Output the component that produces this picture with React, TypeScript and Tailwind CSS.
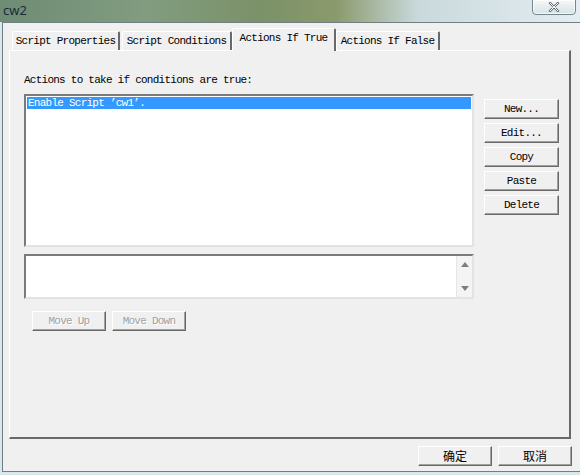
import React from "react";

const mono = "font-['Liberation_Mono',monospace] text-[11px] tracking-[-0.75px]";

const tabs = [
  { label: "Script Properties", w: "w-[108px] ml-[3px]" },
  { label: "Script Conditions", w: "w-[110px] ml-[2px]" },
  { label: "Actions If True", w: "w-[104px]", active: true },
  { label: "Actions If False", w: "w-[104px]" },
];

const sideButtons = ["New...", "Edit...", "Copy", "Paste", "Delete"];

const btn =
  "flex items-center justify-center bg-[#f0f0f0] border border-t-white border-l-white border-r-[#696969] border-b-[#696969] shadow-[inset_-1px_-1px_0_#a0a0a0]";

export default function App() {
  return (
    <div className="w-[580px] h-[475px] overflow-hidden flex flex-col bg-[#d9e8ec]">
      {/* title bar */}
      <div className="h-[22px] flex justify-between items-start bg-[linear-gradient(90deg,#6f8c74_0%,#819c80_25%,#7b9168_45%,#8b9a6c_58%,#c9d9dc_72%,#e4edf1_100%)]">
        <span className="pl-[3px] pt-[2px] text-[13px] leading-[16px] text-[#1b2a3a] font-['Noto_Sans',sans-serif]">
          cw2
        </span>
        <div className="mr-[4px] -mt-px w-[44px] h-[16px] flex items-center justify-center rounded-b-[4px] border border-[#74868c] bg-[linear-gradient(180deg,#f4f7f8,#d8e2e6)] shadow-[inset_0_0_0_1px_rgba(255,255,255,0.7)]">
          <svg width="12" height="10" viewBox="0 0 12 10">
            <path d="M2 1 L10 9 M10 1 L2 9" stroke="#5b6a72" strokeWidth="2.4" strokeLinecap="round" />
            <path d="M2 1 L10 9 M10 1 L2 9" stroke="#ffffff" strokeWidth="1" strokeLinecap="round" />
          </svg>
        </div>
      </div>

      {/* client area */}
      <div className={`ml-[2px] h-[450px] flex flex-col bg-[#f0f0f0] border-l border-t border-b border-[#6f7f84] pt-[5px] text-black ${mono}`}>
        <div className="pl-[6px] flex flex-col">
          {/* tabs */}
          <div className="flex items-end h-[22px]">
            {tabs.map((t) =>
              t.active ? (
                <div
                  key={t.label}
                  className={`${t.w} relative z-10 -mb-px h-[23px] flex items-start justify-center pt-[3px] bg-[#f0f0f0] border-l border-t border-t-white border-l-white border-r-2 border-r-[#696969] rounded-t-[2px] leading-[13px]`}
                >
                  {t.label}
                </div>
              ) : (
                <div
                  key={t.label}
                  className={`${t.w} h-[19px] flex items-start justify-center pt-[3px] border-l border-t border-t-white border-l-white border-r-2 border-r-[#696969] rounded-t-[2px] leading-[13px]`}
                >
                  {t.label}
                </div>
              )
            )}
          </div>

          {/* panel */}
          <div className="w-[562px] h-[389px] border-l border-t border-l-white border-t-white border-r-2 border-b-2 border-r-[#696969] border-b-[#696969] pl-[14px] pt-[23px] flex flex-col">
            <div className="leading-[12px] h-[12px]">Actions to take if conditions are true:</div>

            <div className="flex mt-[8px]">
              {/* list box */}
              <div className="w-[450px] h-[153px] bg-white border-2 border-t-[#7a7a7a] border-l-[#7a7a7a] border-r-[#e3e3e3] border-b-[#e3e3e3] p-px">
                <div className="h-[12px] bg-[#3399ff] text-white leading-[12px] pl-[1px]">
                  Enable Script ’cw1’.
                </div>
              </div>

              <div className="ml-[10px] pt-[5px] flex flex-col gap-[4px]">
                {sideButtons.map((b) => (
                  <div key={b} className={`${btn} w-[75px] h-[20px] leading-[12px]`}>
                    {b}
                  </div>
                ))}
              </div>
            </div>

            {/* text area */}
            <div className="mt-[7px] w-[450px] h-[45px] flex bg-white border-2 border-t-[#7a7a7a] border-l-[#7a7a7a] border-r-[#e3e3e3] border-b-[#e3e3e3]">
              <div className="flex-1" />
              <div className="w-[16px] flex flex-col justify-between items-center py-[6px] bg-[#f4f4f4] border-l border-[#e6e6e6]">
                <svg width="8" height="5" viewBox="0 0 8 5">
                  <path d="M0 5 L4 0 L8 5 Z" fill="#7d7d7d" />
                </svg>
                <svg width="8" height="5" viewBox="0 0 8 5">
                  <path d="M0 0 L8 0 L4 5 Z" fill="#7d7d7d" />
                </svg>
              </div>
            </div>

            {/* move buttons */}
            <div className="mt-[12px] ml-[8px] flex gap-[6px] text-[#a0a0a0]">
              <div className={`${btn} w-[74px] h-[20px] leading-[12px] [text-shadow:1px_1px_0_#fff]`}>Move Up</div>
              <div className={`${btn} w-[74px] h-[20px] leading-[12px] [text-shadow:1px_1px_0_#fff]`}>Move Down</div>
            </div>
          </div>
        </div>

        {/* footer */}
        <div className="mt-[7px] flex justify-end gap-[6px] pr-[8px] font-['Noto_Sans_CJK_SC',sans-serif] text-[12px] tracking-normal">
          <div className={`${btn} w-[74px] h-[20px] leading-[14px]`}>确定</div>
          <div className={`${btn} w-[74px] h-[20px] leading-[14px]`}>取消</div>
        </div>
      </div>
    </div>
  );
}
